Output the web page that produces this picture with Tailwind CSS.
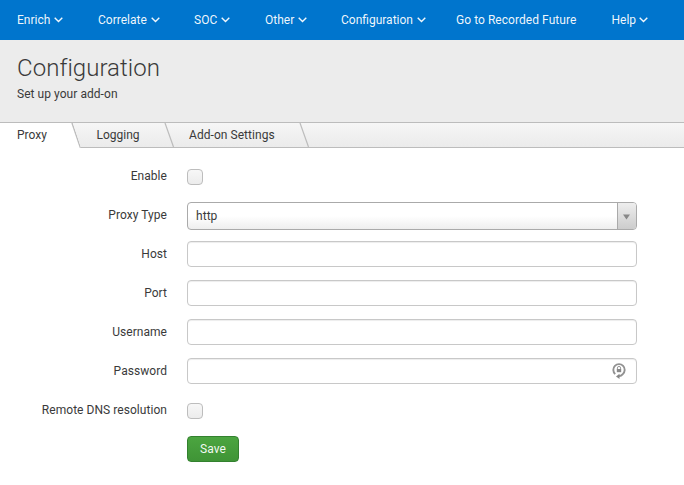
<!DOCTYPE html>
<html lang="en">
<head>
<meta charset="utf-8">
<title>Configuration</title>
<script src="https://cdn.jsdelivr.net/npm/@tailwindcss/browser@4"></script>
</head>
<body class="bg-white font-['Roboto',sans-serif] text-[12px] leading-5 text-[#3a3a3a]">
<nav class="flex h-10 items-center bg-[#0075cd] pl-[17px] text-white/95 whitespace-nowrap">
  <a class="flex w-[81px] items-center gap-1">Enrich<svg class="w-[9px] h-[6px]" viewBox="0 0 9 6" fill="none" stroke="currentColor" stroke-width="1.4"><path d="M.7.8 4.5 4.6 8.3.8"/></svg></a>
  <a class="flex w-24 items-center gap-1">Correlate<svg class="w-[9px] h-[6px]" viewBox="0 0 9 6" fill="none" stroke="currentColor" stroke-width="1.4"><path d="M.7.8 4.5 4.6 8.3.8"/></svg></a>
  <a class="flex w-[71px] items-center gap-[3.5px]">SOC<svg class="w-[9px] h-[6px]" viewBox="0 0 9 6" fill="none" stroke="currentColor" stroke-width="1.4"><path d="M.7.8 4.5 4.6 8.3.8"/></svg></a>
  <a class="flex w-[76px] items-center gap-[3.5px]">Other<svg class="w-[9px] h-[6px]" viewBox="0 0 9 6" fill="none" stroke="currentColor" stroke-width="1.4"><path d="M.7.8 4.5 4.6 8.3.8"/></svg></a>
  <a class="flex w-[115px] items-center gap-1">Configuration<svg class="w-[9px] h-[6px]" viewBox="0 0 9 6" fill="none" stroke="currentColor" stroke-width="1.4"><path d="M.7.8 4.5 4.6 8.3.8"/></svg></a>
  <a class="w-[155.5px] tracking-[0.05px]">Go to Recorded Future</a>
  <a class="flex items-center gap-[3px]">Help<svg class="w-[9px] h-[6px]" viewBox="0 0 9 6" fill="none" stroke="currentColor" stroke-width="1.4"><path d="M.7.8 4.5 4.6 8.3.8"/></svg></a>
</nav>
<header class="h-[82px] bg-[#ececec] px-[17px] pt-[13px]">
  <h1 class="text-[24px] leading-[30px] font-light tracking-[0.05px]">Configuration</h1>
  <p class="pt-px leading-5 tracking-[0.05px]">Set up your add-on</p>
</header>
<div class="flex h-[26px] border-y border-[#bcbcbc] bg-linear-to-b from-[#f6f6f6] to-[#ebebeb] leading-6">
  <div class="-mb-px flex h-[25px] w-[81px] justify-between bg-white pl-[17px] [clip-path:polygon(0_0,73px_0,81px_100%,0_100%)]"><span>Proxy</span><svg class="h-[25px] w-[10px]" viewBox="0 0 10 25" fill="none" stroke="#bcbcbc" stroke-width="1.4"><path d="M1 0 9.5 25"/></svg></div>
  <div class="flex w-[93px] justify-between pl-[15.5px]"><span>Logging</span><svg class="h-6 w-[10px]" viewBox="0 0 10 24" fill="none" stroke="#bcbcbc" stroke-width="1.2"><path d="M1 0 9.5 24"/></svg></div>
  <div class="flex w-[135px] justify-between pl-[15px]"><span class="tracking-[0.05px]">Add-on Settings</span><svg class="h-6 w-[10px]" viewBox="0 0 10 24" fill="none" stroke="#bcbcbc" stroke-width="1.2"><path d="M1 0 9.5 24"/></svg></div>
</div>
<form class="grid grid-cols-[167px_450px] auto-rows-[39px] gap-x-5 pt-[15px] text-right tracking-[0.05px]">
  <label class="pt-[3px]">Enable</label>
  <div class="pt-[6px]"><div class="size-4 rounded-[4px] border border-[#bdbdbd] bg-linear-to-b from-[#f7f7f7] to-[#ececec]"></div></div>
  <label class="pt-[3px]">Proxy Type</label>
  <div><div class="flex h-7 overflow-hidden rounded-[4px] border border-[#aaa] bg-linear-to-b from-white from-50% to-[#eee] text-left">
    <span class="flex-1 pl-2 leading-[26px]">http</span>
    <span class="flex w-[19px] items-center justify-center border-l border-[#aaa] bg-linear-to-b from-[#eee] to-[#ccc] pr-[2px]"><svg class="mt-px h-[6px] w-[7px]" viewBox="0 0 7 6"><path d="M0 .5h7L3.5 5.5z" fill="#888"/></svg></span>
  </div></div>
  <label class="pt-[3px]">Host</label>
  <div><div class="h-[26px] rounded-[4px] border border-[#c8c8c8] bg-white shadow-[inset_0_1px_1px_rgba(0,0,0,0.075)]"></div></div>
  <label class="pt-[3px]">Port</label>
  <div><div class="h-[26px] rounded-[4px] border border-[#c8c8c8] bg-white shadow-[inset_0_1px_1px_rgba(0,0,0,0.075)]"></div></div>
  <label class="pt-[3px]">Username</label>
  <div><div class="h-[26px] rounded-[4px] border border-[#c8c8c8] bg-white shadow-[inset_0_1px_1px_rgba(0,0,0,0.075)]"></div></div>
  <label class="pt-[3px]">Password</label>
  <div><div class="flex h-[26px] items-center justify-end rounded-[4px] border border-[#c8c8c8] bg-white pr-[10px] shadow-[inset_0_1px_1px_rgba(0,0,0,0.075)]">
    <svg class="h-4 w-[14px]" viewBox="0 0 14 16" fill="none"><path d="M3.2 11.1A5.7 5.7 0 1 1 10.8 11.1Q9.4 13.1 6.5 13.3" stroke="#929292" stroke-width="1.9"/><path d="M4 13.4 7.5 10.8v5.2z" fill="#858585"/><path d="M5.4 6.5V5a1.6 1.6 0 0 1 3.2 0v1.5" stroke="#999" stroke-width="1"/><path d="M4.8 6h4.4v3.2H4.8z" fill="#888"/></svg>
  </div></div>
  <label class="pt-[3px]">Remote DNS resolution</label>
  <div class="pt-[6px]"><div class="size-4 rounded-[4px] border border-[#bdbdbd] bg-linear-to-b from-[#f7f7f7] to-[#ececec]"></div></div>
  <div class="col-start-2 flex"><button type="button" class="h-[26px] w-[52px] rounded-[4px] border border-[#33812f] bg-linear-to-b from-[#4ba540] to-[#3f9436] leading-6 text-white/95">Save</button></div>
</form>
</body>
</html>
